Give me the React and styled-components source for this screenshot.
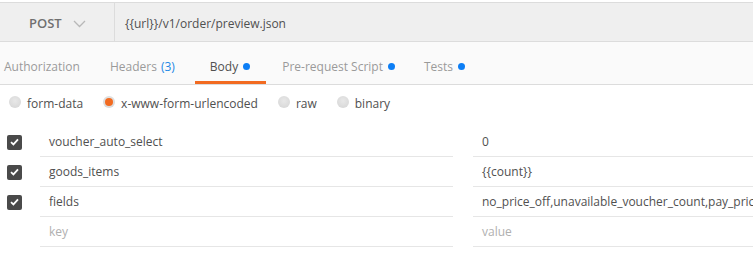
import styled, { createGlobalStyle } from "styled-components";

const GlobalStyle = createGlobalStyle`
  html, body {
    margin: 0;
    padding: 0;
    background: #fff;
    font-family: "Open Sans", "Liberation Sans", sans-serif;
    overflow: hidden;
  }
`;

const tabs = [
  { label: "Authorization", gap: 0 },
  { label: "Headers", count: 3, gap: 5 },
  { label: "Body", dot: true, active: true, gap: 1, pad: 16 },
  { label: "Pre-request Script", dot: true, gap: -1 },
  { label: "Tests", dot: true, gap: 0 },
];

const modes = [
  { label: "form-data" },
  { label: "x-www-form-urlencoded", checked: true },
  { label: "raw" },
  { label: "binary" },
];

const params = [
  { key: "voucher_auto_select", value: "0", on: true },
  { key: "goods_items", value: "{{count}}", on: true },
  { key: "fields", value: "no_price_off,unavailable_voucher_count,pay_price", on: true },
  { key: "key", value: "value", placeholder: true },
];

function Check() {
  return (
    <CheckBox>
      <svg width="9" height="8" viewBox="0 0 9 8">
        <path d="M1 4.2 L3.4 6.4 L8 1.4" fill="none" stroke="#fff" strokeWidth="1.8" />
      </svg>
    </CheckBox>
  );
}

function Chevron() {
  return (
    <svg width="13" height="8" viewBox="0 0 13 8">
      <path d="M1 1 L6.5 6.5 L12 1" fill="none" stroke="#b8b8b8" strokeWidth="1.3" />
    </svg>
  );
}

export default function App() {
  return (
    <>
      <GlobalStyle />
      <Page>
        <UrlBar>
          <Method>
            POST
            <Chevron />
          </Method>
          <Url>{"{{url}}/v1/order/preview.json"}</Url>
        </UrlBar>
        <TabBar>
          {tabs.map((t) => (
            <Tab key={t.label} $active={t.active} $gap={t.gap} $pad={t.pad || 15}>
              {t.label}
              {t.count && <Count>({t.count})</Count>}
              {t.dot && <Dot />}
            </Tab>
          ))}
        </TabBar>
        <Modes>
          {modes.map((m) => (
            <Mode key={m.label}>
              <Radio $checked={m.checked} />
              {m.label}
            </Mode>
          ))}
        </Modes>
        <Table>
          {params.map((p) => (
            <Row key={p.key}>
              <CheckCell>{p.on && <Check />}</CheckCell>
              <Cell $placeholder={p.placeholder}>{p.key}</Cell>
              <Cell $placeholder={p.placeholder}>{p.value}</Cell>
            </Row>
          ))}
        </Table>
      </Page>
    </>
  );
}

const Page = styled.div`
  width: 753px;
  padding-top: 2px;
  overflow: hidden;
`;

const UrlBar = styled.div`
  display: flex;
  height: 38px;
  background: #efefef;
  border-top: 1px solid #dcdcdc;
  border-bottom: 1px solid #dcdcdc;
`;

const Method = styled.div`
  width: 115px;
  box-sizing: border-box;
  border-right: 1px solid #dcdcdc;
  display: flex;
  align-items: center;
  gap: 11px;
  padding-left: 29px;
  padding-top: 2px;
  font-size: 13px;
  font-weight: 600;
  color: #707070;
  svg {
    margin-top: 1px;
  }
`;

const Url = styled.div`
  display: flex;
  align-items: center;
  padding-left: 10px;
  padding-top: 2px;
  font-size: 12px;
  color: #505050;
`;

const TabBar = styled.div`
  display: flex;
  height: 42px;
  background: #fafafa;
  border-bottom: 1px solid #dcdcdc;
  padding-left: 4px;
  box-sizing: content-box;
`;

const Tab = styled.div`
  position: relative;
  display: flex;
  align-items: center;
  padding: 7px ${(p) => p.$pad}px 0 15px;
  margin-right: ${(p) => p.$gap}px;
  font-size: 12px;
  color: ${(p) => (p.$active ? "#505050" : "#9a9a9a")};
  &:first-child {
    padding-left: 0;
  }
  &::after {
    content: "";
    display: ${(p) => (p.$active ? "block" : "none")};
    position: absolute;
    left: 0;
    right: 0;
    bottom: 0;
    height: 3px;
    background: #f26b21;
  }
`;

const Count = styled.span`
  color: #1e88e5;
  margin-left: 4px;
`;

const Dot = styled.span`
  width: 7px;
  height: 7px;
  border-radius: 50%;
  background: #0c7ef5;
  margin-left: 5px;
  margin-top: -1px;
`;

const Modes = styled.div`
  display: flex;
  align-items: center;
  height: 36px;
  padding-left: 9px;
  gap: 20px;
`;

const Mode = styled.label`
  display: flex;
  align-items: center;
  gap: 6px;
  font-size: 12px;
  color: #505050;
`;

const Radio = styled.span`
  width: 12px;
  height: 12px;
  border-radius: 50%;
  box-sizing: border-box;
  background: radial-gradient(circle at 50% 40%, #e8e8e8, #d4d4d4);
  margin-top: -3px;
  position: relative;
  &::after {
    content: "";
    display: ${(p) => (p.$checked ? "block" : "none")};
    position: absolute;
    left: 2px;
    top: 2px;
    width: 8px;
    height: 8px;
    border-radius: 50%;
    background: #f26b21;
  }
`;

const Table = styled.div`
  display: flex;
  flex-direction: column;
  padding-top: 6px;
`;

const Row = styled.div`
  display: grid;
  grid-template-columns: 40px 413px 320px;
  height: 30px;
`;

const CheckCell = styled.div`
  display: flex;
  align-items: center;
  padding-left: 7px;
`;

const CheckBox = styled.span`
  width: 15px;
  height: 15px;
  border-radius: 2px;
  background: #4a4a4a;
  display: flex;
  align-items: center;
  justify-content: center;
`;

const Cell = styled.div`
  display: flex;
  align-items: center;
  padding-left: 9px;
  border-bottom: 1px solid #e6e6e6;
  font-size: 12px;
  white-space: nowrap;
  overflow: hidden;
  color: ${(p) => (p.$placeholder ? "#b0b0b0" : "#505050")};
  & + & {
    margin-left: 20px;
  }
`;
